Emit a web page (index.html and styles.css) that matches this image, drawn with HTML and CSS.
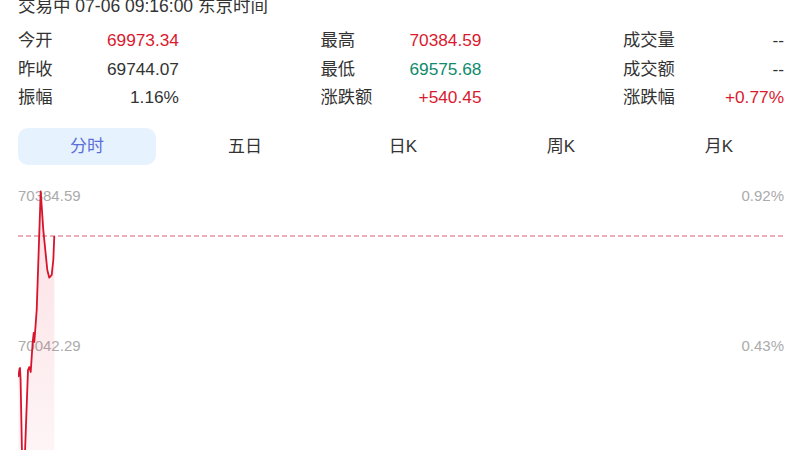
FILE: index.html
```html
<!DOCTYPE html>
<html lang="zh-CN">
<head>
<meta charset="utf-8">
<title>行情</title>
<link rel="stylesheet" href="styles.css">
</head>
<body>
<div class="page">
  <div class="status">交易中 07-06 09:16:00 东京时间</div>

  <div class="stats">
    <div class="cell"><span class="lbl">今开</span><span class="val up">69973.34</span></div>
    <div class="cell"><span class="lbl">最高</span><span class="val up">70384.59</span></div>
    <div class="cell"><span class="lbl">成交量</span><span class="val">--</span></div>

    <div class="cell"><span class="lbl">昨收</span><span class="val">69744.07</span></div>
    <div class="cell"><span class="lbl">最低</span><span class="val down">69575.68</span></div>
    <div class="cell"><span class="lbl">成交额</span><span class="val">--</span></div>

    <div class="cell"><span class="lbl">振幅</span><span class="val">1.16%</span></div>
    <div class="cell"><span class="lbl">涨跌额</span><span class="val up">+540.45</span></div>
    <div class="cell"><span class="lbl">涨跌幅</span><span class="val up">+0.77%</span></div>
  </div>

  <div class="tabs">
    <div class="tab active">分时</div>
    <div class="tab">五日</div>
    <div class="tab">日K</div>
    <div class="tab">周K</div>
    <div class="tab">月K</div>
  </div>

  <div class="chart">
    <span class="axis axis-l top">70384.59</span>
    <span class="axis axis-r top">0.92%</span>
    <span class="axis axis-l mid">70042.29</span>
    <span class="axis axis-r mid">0.43%</span>
    <svg class="plot" width="784" height="280" viewBox="0 0 784 280" xmlns="http://www.w3.org/2000/svg">
      <defs>
        <linearGradient id="fillg" x1="0" y1="0" x2="0" y2="1">
          <stop offset="0" stop-color="#e8384f" stop-opacity="0.16"/>
          <stop offset="1" stop-color="#e8384f" stop-opacity="0.04"/>
        </linearGradient>
      </defs>
      <line x1="0" y1="56" x2="767" y2="56" class="prev"/>
      <path class="area" d="M0.3,197 L1.5,189 L2,188 L2.6,200 L4.5,300 L6,300 L10,190 L11.3,187 L12.7,192 L14.7,162 L15.7,153 L16.3,162 L17,153 L18.7,130 L22.7,11.5 L25.3,50 L29.3,90 L31.3,97.7 L33.7,95 L35.3,80 L36.3,56 L36.3,300 L0.3,300 Z"/>
      <path class="line" d="M0.3,197 L1.5,189 L2,188 L2.6,200 L4.5,300 L6,300 L10,190 L11.3,187 L12.7,192 L14.7,162 L15.7,153 L16.3,162 L17,153 L18.7,130 L22.7,11.5 L25.3,50 L29.3,90 L31.3,97.7 L33.7,95 L35.3,80 L36.3,56"/>
    </svg>
  </div>
</div>
</body>
</html>
```

FILE: styles.css
```css
html, body {
  margin: 0;
  padding: 0;
  background: #ffffff;
  overflow: hidden;
}

body {
  font-family: "Liberation Sans", "Noto Sans CJK SC", sans-serif;
  color: #333333;
  width: 800px;
  height: 450px;
}

.page {
  padding: 0 16px 0 18px;
  display: flex;
  flex-direction: column;
}

.status {
  font-size: 17.5px;
  line-height: 20px;
  margin-top: -4px;
  color: #333333;
  white-space: nowrap;
}

.stats {
  margin-top: 10px;
  display: grid;
  grid-template-columns: repeat(3, 161px);
  grid-auto-rows: 28.7px;
  justify-content: space-between;
  font-size: 17.3px;
  line-height: 28.7px;
}

.cell {
  display: flex;
  justify-content: space-between;
  white-space: nowrap;
}

.lbl {
  color: #333333;
}

.val {
  color: #333333;
}

.val.up {
  color: #d91a2f;
}

.val.down {
  color: #0e8a6c;
}

.tabs {
  margin-top: 16px;
  display: flex;
  gap: 20px;
}

.tab {
  flex: 0 0 138px;
  height: 37px;
  line-height: 37px;
  text-align: center;
  font-size: 17px;
  color: #333333;
  border-radius: 10px;
}

.tab.active {
  background: #e7f2ff;
  color: #5b6fd8;
}

.chart {
  position: relative;
  margin-top: 15px;
  height: 280px;
}

.plot {
  position: absolute;
  left: 0;
  top: 0;
  overflow: hidden;
}

.prev {
  stroke: #e693a1;
  stroke-width: 1.5;
  stroke-dasharray: 5 3;
}

.area {
  fill: url(#fillg);
  stroke: none;
}

.line {
  fill: none;
  stroke: #d8132c;
  stroke-width: 1.8;
  stroke-linejoin: round;
}

.axis {
  position: absolute;
  font-size: 15px;
  line-height: 18px;
  color: #ababab;
  white-space: nowrap;
}

.axis-l {
  left: 0;
}

.axis-r {
  right: 0;
}

.axis.top {
  top: 7px;
}

.axis.mid {
  top: 157px;
}
```
